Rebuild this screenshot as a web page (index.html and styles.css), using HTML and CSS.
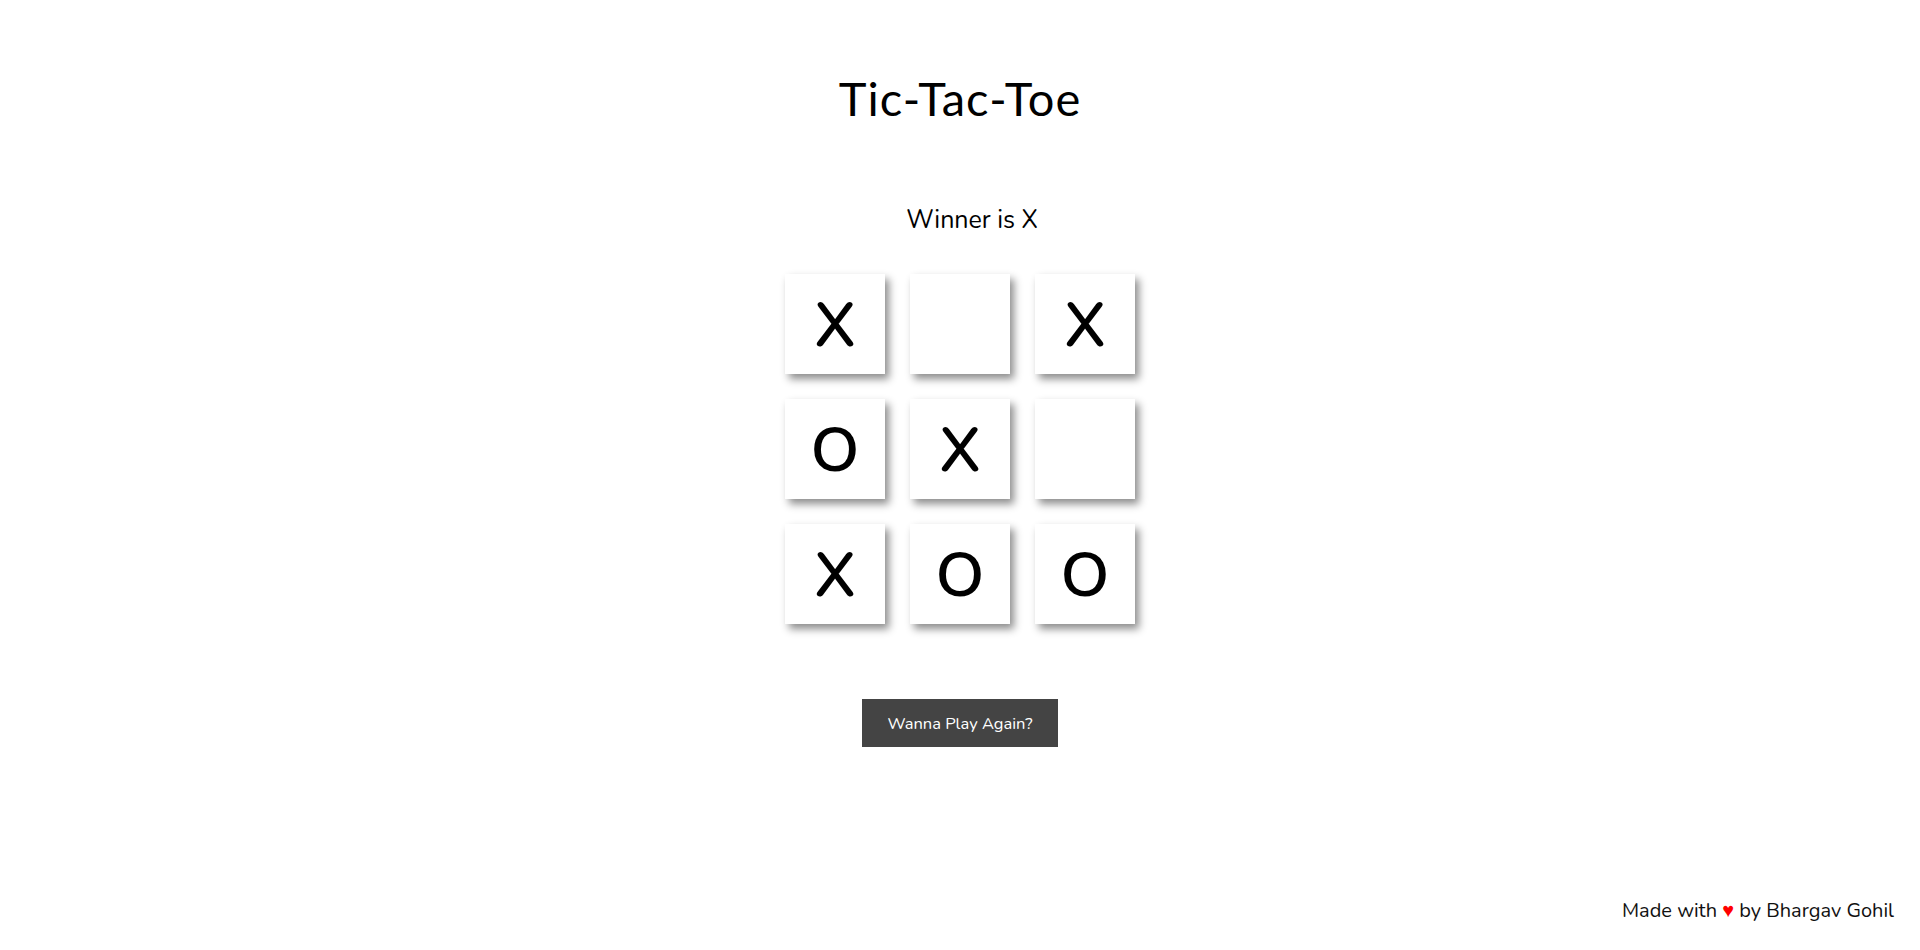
FILE: index.html
```html
<!DOCTYPE html>
<html lang="en">
<head>
<meta charset="utf-8">
<title>Tic-Tac-Toe</title>
<link rel="stylesheet" href="styles.css">
</head>
<body>
  <main class="game">
    <h1 class="title">Tic-Tac-Toe</h1>
    <p class="status">Winner is X</p>
    <div class="board">
      <div class="cell">X</div>
      <div class="cell"></div>
      <div class="cell">X</div>
      <div class="cell">O</div>
      <div class="cell">X</div>
      <div class="cell"></div>
      <div class="cell">X</div>
      <div class="cell">O</div>
      <div class="cell">O</div>
    </div>
    <button class="again" type="button">Wanna Play Again?</button>
  </main>
  <footer class="credit">Made with <span class="heart">&#9829;</span> by Bhargav Gohil</footer>
</body>
</html>
```
FILE: styles.css
```css
html, body {
  margin: 0;
  padding: 0;
  background: #ffffff;
}

body {
  min-height: 100vh;
  display: flex;
  flex-direction: column;
  font-family: "Nunito", "Lato", "Open Sans", sans-serif;
  color: #000;
  box-sizing: border-box;
}

.game {
  display: flex;
  flex-direction: column;
  align-items: center;
}

.title {
  margin: 71px 0 0;
  font-family: "Lato", sans-serif;
  font-weight: 400;
  font-size: 47px;
  line-height: 54px;
  letter-spacing: 1px;
}

.status {
  margin: 80px 0 0;
  padding-left: 24px;
  font-size: 25px;
  line-height: 30px;
  font-weight: 400;
}

.board {
  margin-top: 39px;
  display: grid;
  grid-template-columns: repeat(3, 100px);
  grid-auto-rows: 100px;
  gap: 25px;
}

.cell {
  background: #fff;
  box-shadow: 4px 5px 8px rgba(0, 0, 0, 0.45);
  display: flex;
  align-items: center;
  justify-content: center;
  font-size: 63px;
  font-weight: 600;
  line-height: 1;
  padding-top: 2px;
  box-sizing: border-box;
}

.again {
  margin-top: 75px;
  width: 196px;
  height: 48px;
  border: none;
  border-radius: 0;
  background: #444444;
  color: #fff;
  font-family: "Nunito", "Lato", sans-serif;
  font-size: 16.5px;
  cursor: pointer;
}

.credit {
  margin-top: auto;
  padding: 0 26px 27px 0;
  text-align: right;
  font-size: 20px;
  line-height: 24px;
  color: #111;
}

.heart {
  color: #f00;
}
```
